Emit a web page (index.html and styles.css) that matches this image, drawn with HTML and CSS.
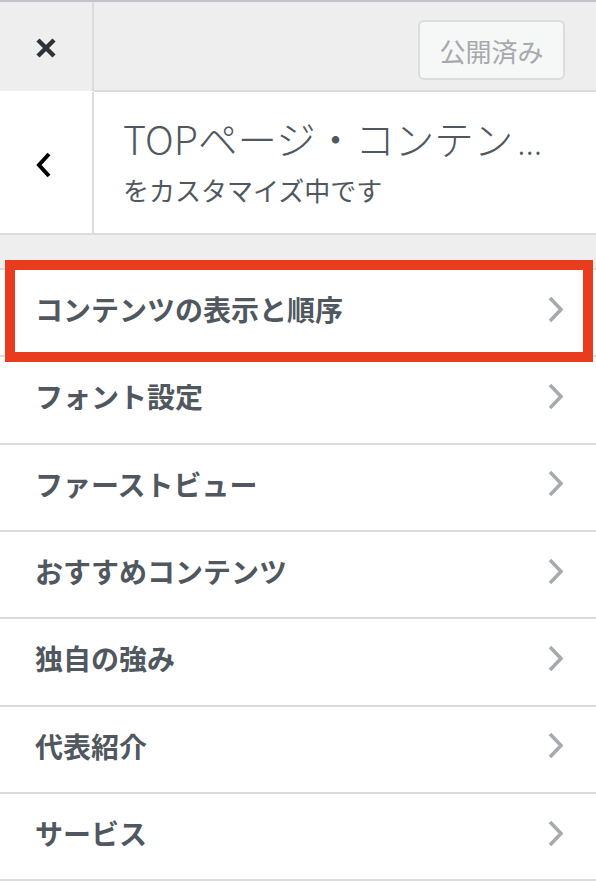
FILE: index.html
```html
<!DOCTYPE html>
<html lang="ja">
<head>
    <meta charset="UTF-8">
    <meta name="viewport" content="width=device-width, initial-scale=1.0">
    <title>カスタマイズ</title>
    <link rel="stylesheet" href="styles.css">
</head>
<body>
    <div class="customizer">
        <header class="topbar">
            <button type="button" class="close" aria-label="閉じる">
                <svg width="22" height="22" viewBox="0 0 22 22"><path d="M3 3 L19 19 M19 3 L3 19" /></svg>
            </button>
            <div class="actions">
                <button type="button" class="publish">公開済み</button>
            </div>
        </header>

        <div class="panel-head">
            <button type="button" class="back" aria-label="戻る">
                <svg width="16" height="26" viewBox="0 0 16 26"><path d="M13 2 L3 13 L13 24" /></svg>
            </button>
            <div class="panel-title">
                <h1>TOPページ・コンテン<span class="dots">...</span></h1>
                <p>をカスタマイズ中です</p>
            </div>
        </div>

        <div class="panel-body">
            <ul class="sections">
                <!-- 強調表示されている項目 -->
                <li class="section highlight">コンテンツの表示と順序<svg class="arrow" width="15" height="27" viewBox="0 0 15 27"><path d="M2 2 L13 13.5 L2 25" /></svg></li>
                <li class="section">フォント設定<svg class="arrow" width="15" height="27" viewBox="0 0 15 27"><path d="M2 2 L13 13.5 L2 25" /></svg></li>
                <li class="section">ファーストビュー<svg class="arrow" width="15" height="27" viewBox="0 0 15 27"><path d="M2 2 L13 13.5 L2 25" /></svg></li>
                <li class="section">おすすめコンテンツ<svg class="arrow" width="15" height="27" viewBox="0 0 15 27"><path d="M2 2 L13 13.5 L2 25" /></svg></li>
                <li class="section">独自の強み<svg class="arrow" width="15" height="27" viewBox="0 0 15 27"><path d="M2 2 L13 13.5 L2 25" /></svg></li>
                <li class="section">代表紹介<svg class="arrow" width="15" height="27" viewBox="0 0 15 27"><path d="M2 2 L13 13.5 L2 25" /></svg></li>
                <li class="section">サービス<svg class="arrow" width="15" height="27" viewBox="0 0 15 27"><path d="M2 2 L13 13.5 L2 25" /></svg></li>
            </ul>
        </div>
    </div>
</body>
</html>
```

FILE: styles.css
```css
*{
    margin: 0;
    padding: 0;
    box-sizing: border-box;
}
body{
    background-color: #fff;
    font-family: "Noto Sans CJK JP", "Noto Sans", sans-serif;
    color: #50575e;
}
.customizer{
    width: 596px;
}

/* 上のバー */
.topbar{
    display: flex;
    border-top: 2px solid #c3c4c7;
}
.topbar .close{
    width: 94px;
    height: 89px;
    background-color: #eeeeee;
    border: none;
    border-right: 2px solid #dcdcde;
    display: flex;
    justify-content: center;
    align-items: center;
    padding-top: 3px;
}
.topbar .close path{
    fill: none;
    stroke: #2c3338;
    stroke-width: 4.5;
}
.topbar .actions{
    flex: 1;
    height: 90px;
    background-color: #eeeeee;
    border-bottom: 2px solid #dcdcde;
    display: flex;
    justify-content: flex-end;
    align-items: flex-start;
    padding: 18px 31px 0 0;
}
.topbar .publish{
    width: 147px;
    height: 60px;
    font-family: inherit;
    font-size: 26px;
    color: #a7aaad;
    background-color: #f6f7f7;
    border: 2px solid #dcdcde;
    border-radius: 6px;
}

/* パネルの見出し */
.panel-head{
    display: flex;
    height: 143px;
    border-bottom: 2px solid #dcdcde;
}
.panel-head .back{
    width: 94px;
    background-color: #fff;
    border: none;
    border-right: 2px solid #dcdcde;
    display: flex;
    justify-content: center;
    align-items: center;
    padding: 4px 4px 0 0;
}
.panel-head .back path{
    fill: none;
    stroke: #000;
    stroke-width: 4;
}
.panel-title{
    flex: 1;
    padding: 22px 0 0 29px;
}
.panel-title h1{
    font-size: 39.5px;
    font-weight: 300;
    line-height: 48px;
    white-space: nowrap;
}
.panel-title .dots{
    font-family: "Noto Sans", sans-serif;
    font-size: 34px;
    margin-left: 4px;
}
.panel-title p{
    margin-top: 6px;
    font-size: 26px;
    line-height: 36px;
}

/* セクション一覧 */
.panel-body{
    background-color: #eeeeee;
    padding-top: 33px;
}
.sections{
    list-style: none;
    background-color: #fff;
    border-top: 2px solid #dcdcde;
}
.section{
    height: 87.33px;
    border-bottom: 2px solid #dcdcde;
    display: flex;
    justify-content: space-between;
    align-items: center;
    padding: 0 33px 7px 35px;
    font-size: 28px;
    font-weight: 700;
    color: #50575e;
}
.section .arrow path{
    fill: none;
    stroke: #a7aaad;
    stroke-width: 3.5;
}
.section.highlight{
    position: relative;
}
.section.highlight::after{
    content: "";
    position: absolute;
    top: -10px;
    left: 5px;
    right: 3px;
    bottom: -7px;
    border: 10px solid #e93c1e;
    pointer-events: none;
}
```
